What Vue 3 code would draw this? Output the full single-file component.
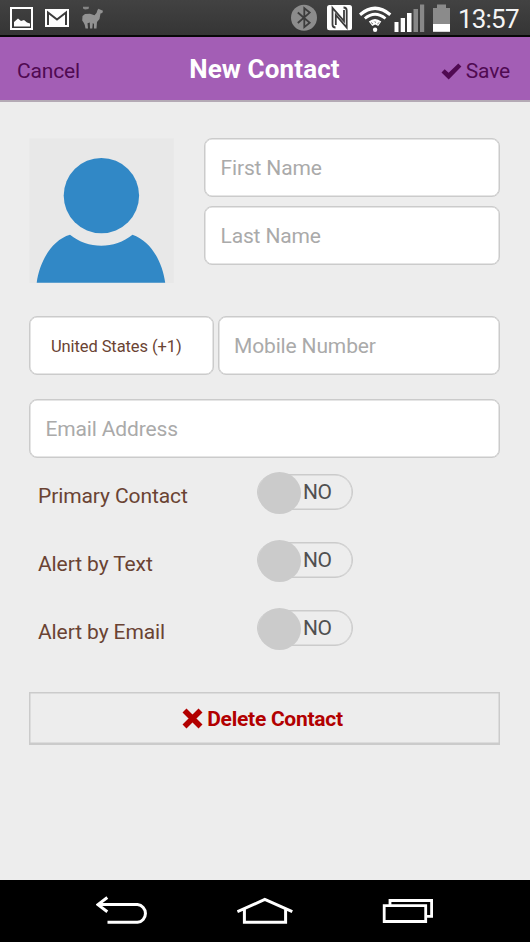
<script setup>
import { reactive } from 'vue'

const form = reactive({ first: '', last: '', mobile: '', email: '' })
const toggles = reactive([
  { label: 'Primary Contact', on: false },
  { label: 'Alert by Text', on: false },
  { label: 'Alert by Email', on: false },
])
</script>

<template>
  <div class="screen">
    <div class="status">
      <svg class="pic" width="23" height="35" viewBox="10 0 23 35">
        <path d="M11 8H32V29H11Z" fill="none" stroke="#fff" stroke-width="2" />
        <path d="M14 26.5V22L18 18.5L21 21L24 20L27 22.5L30 23.5V26.5Z" fill="#fff" />
      </svg>
      <svg class="mail" width="24" height="35" viewBox="45 0 24 35">
        <path d="M45 9H69V27H45Z" fill="#fff" />
        <path d="M48 25V12.5L57 19.5L66 12.5V25" fill="none" stroke="#3c3c3c" stroke-width="2" />
      </svg>
      <svg class="llama" width="22" height="35" viewBox="82 0 22 35">
        <path d="M83 6.800H89L88.500 9L85 9.600L83 8.500Z" fill="#858585" />
        <path d="M97.500 10L98.500 8.800L100 9.500L103 10.800L102.300 13L100.500 13.500L99.500 19L97 22L96.500 28.500H94L94 24L92.800 23L92.300 28.500H90L89.800 22.500L87.500 23.200L88 28.500H85.500L84.800 25L83.600 22.500L82.200 20.500L82.500 16L85 14L90 13.800L94.500 15.200L96.500 13Z" fill="#929292" />
      </svg>
      <span class="spacer"></span>
      <svg class="bt" width="26" height="35" viewBox="291 0 26 35">
        <circle cx="304" cy="17.800" r="13" fill="#8c8c8c" />
        <path d="M297.800 12.500L309.700 22.800L304.300 27.200V8.200L309.700 12.600L297.800 23" fill="none" stroke="#3d3d3d" stroke-width="1.800" />
      </svg>
      <svg class="nfc" width="25" height="35" viewBox="327 0 25 35">
        <rect x="327" y="5" width="25" height="25.200" rx="2.500" fill="#fff" />
        <path d="M335.500 27.500Q332.500 27.500 332.500 24.500V8L344 21V10M343.500 7.500Q346.700 7.500 346.700 10.500V27.500L335.800 15V25" fill="none" stroke="#3c3c3c" stroke-width="1.800" />
      </svg>
      <svg class="wifi" width="33" height="35" viewBox="359 0 33 35">
        <g fill="none" stroke="#fff">
          <path d="M360 14.700Q375 1.800 390.300 14.700" stroke-width="3.200" />
          <path d="M364.800 18.500Q375 10 385.500 18.500" stroke-width="2.800" />
        </g>
        <path d="M368.800 21.500Q375 16.500 381.300 21.500L378.200 26L375.200 24.500L372.300 26Z" fill="#fff" />
        <path d="M371 22.500L373 24M379.300 22.500L377.300 24M374.300 21.500L375.200 22.400L376.100 21.500" fill="none" stroke="#555" stroke-width="0.800" />
        <circle cx="375.100" cy="29.700" r="2.200" fill="#fff" />
      </svg>
      <svg class="signal" width="31" height="35" viewBox="394 0 31 35">
        <path d="M394.500 22H398.500V32H394.500ZM400.700 18H405V32H400.700ZM407 13H411.500V32H407Z" fill="#fff" />
        <path d="M413.500 9H418V32H413.500ZM420 4.500H424.200V32H420Z" fill="#888" />
      </svg>
      <svg class="battery" width="18" height="35" viewBox="433 0 18 35">
        <path d="M437 4.500H446V8H450V24H433V8H437Z" fill="#8b8b8b" />
        <path d="M433 24H450V31.800H433Z" fill="#fff" />
      </svg>
      <span class="time">13:57</span>
    </div>

    <header class="header">
      <button class="link cancel">Cancel</button>
      <h1>New Contact</h1>
      <button class="link save">
        <svg width="21" height="17" viewBox="0 0 21 17"><path d="M0.500 9.500L3.700 6.200L7.600 9.800L17.300 0.500L20.400 3.600L7.700 16.400Z" fill="#500a52" /></svg>
        <span>Save</span>
      </button>
    </header>

    <main class="body">
      <div class="top">
        <svg class="avatar" width="145" height="145" viewBox="29 138 145 145">
          <rect x="29.500" y="138.300" width="144.300" height="145" fill="#e8e8e8" />
          <circle cx="101.400" cy="195.600" r="37.700" fill="#3188c6" />
          <path d="M36.700 282.800C39.500 262 51.500 240 70 234.700C88 249.400 114.500 249.400 132.500 234.700C151 241 162.500 262 165.200 282.800Z" fill="#3188c6" />
        </svg>
        <div class="names">
          <input v-model="form.first" placeholder="First Name" />
          <input v-model="form.last" placeholder="Last Name" />
        </div>
      </div>

      <div class="phone">
        <button class="country">United States (+1)</button>
        <input v-model="form.mobile" placeholder="Mobile Number" />
      </div>

      <input v-model="form.email" class="email" placeholder="Email Address" />

      <div class="toggles">
        <div v-for="t in toggles" :key="t.label" class="row">
          <span class="label">{{ t.label }}</span>
          <button class="switch" :class="{ on: t.on }" @click="t.on = !t.on">
            <i class="knob"></i><span class="state">{{ t.on ? 'YES' : 'NO' }}</span>
          </button>
        </div>
      </div>

      <button class="delete">
        <svg width="21" height="21" viewBox="0 0 21 21"><path d="M2.500 2.500L18.500 18.500M18.500 2.500L2.500 18.500" stroke="#b20000" stroke-width="5.600" /></svg>
        <span>Delete Contact</span>
      </button>
    </main>

    <nav class="nav">
      <svg width="52" height="30" viewBox="96 895 52 30" fill="none" stroke="#fff" stroke-width="3">
        <path d="M107.300 897.500L98 904.600L107.300 911.700M98 904.600H137.500A8.900 8.900 0 0 1 137.500 922.300H107.500" />
      </svg>
      <svg width="56" height="30" viewBox="237 895 56 30" fill="none" stroke="#fff" stroke-width="3">
        <path d="M237.400 911.700L264.800 899.500L292.300 911.700M244.400 909.500V922.200H285.600V909.500" />
      </svg>
      <svg width="52" height="30" viewBox="382 895 52 30" fill="none" stroke="#fff" stroke-width="2.800">
        <path d="M384.200 905.600H425.700V921.500H384.200ZM390 905V900.500H431.600V916.400H426" />
      </svg>
    </nav>
  </div>
</template>

<style>
body {
  margin: 0;
  background: #ededed;
}
</style>

<style scoped>
.screen {
  width: 530px;
  height: 942px;
  display: flex;
  flex-direction: column;
  overflow: hidden;
  background: #ededed;
  font-family: Roboto, "Liberation Sans", sans-serif;
}
.screen * { box-sizing: border-box; }
svg { display: block; flex: none; }
button, input {
  font-family: inherit;
  margin: 0;
  padding: 0;
  border: 0;
  background: none;
  outline: none;
}
.status {
  height: 37px;
  flex: none;
  display: flex;
  padding: 0 11px 0 10px;
  background: linear-gradient(#424242, #353535 35px, #080808 35px, #080808);
}
.mail { margin-left: 12px; }
.llama { margin-left: 13px; }
.spacer { flex: 1; }
.nfc { margin-left: 10px; }
.wifi { margin-left: 7px; }
.signal { margin-left: 2px; }
.battery { margin-left: 8px; }
.time {
  width: 61px;
  margin-left: 7px;
  font-size: 26px;
  letter-spacing: -0.800px;
  line-height: 38px;
  color: #f4f4f4;
  white-space: nowrap;
}
.header {
  height: 65px;
  flex: none;
  display: grid;
  grid-template-columns: 1fr auto 1fr;
  padding: 0 19px 0 17px;
  background: #a35eb5;
  border-bottom: 2px solid #b4aab5;
}
.header h1 {
  margin: 0;
  padding-left: 1px;
  font-size: 26px;
  letter-spacing: 0.120px;
  line-height: 64px;
  font-weight: 700;
  color: #fff;
}
.link {
  font-size: 21px;
  letter-spacing: -0.150px;
  line-height: 67px;
  padding-top: 1px;
  color: #500a52;
  text-align: left;
}
.save {
  display: flex;
  justify-content: flex-end;
  align-items: center;
  gap: 4px;
  padding-right: 1px;
}
.body {
  flex: 1;
  display: flex;
  flex-direction: column;
  padding: 36px 30px 0 29px;
}
input, .country {
  height: 59px;
  width: 100%;
  border: 1px solid #cbcbcb;
  box-shadow: inset 0 0 0 0.500px #cbcbcb;
  border-radius: 8px;
  background: #fff;
  font-size: 21px;
  letter-spacing: -0.150px;
  padding-left: 15.500px;
  color: #6a4333;
}
input::placeholder { color: #aaa; opacity: 1; }
.top {
  display: flex;
  justify-content: space-between;
}
.names {
  width: 296px;
  display: flex;
  flex-direction: column;
  gap: 9px;
}
.phone {
  display: flex;
  gap: 4px;
  margin-top: 33px;
}
.phone .country {
  width: 185px;
  flex: none;
  font-size: 16.500px;
  letter-spacing: -0.100px;
  text-align: left;
  padding: 2px 0 0 21px;
}
.phone input { padding-left: 15px; }
.email { margin-top: 24px; flex: none; }
.toggles {
  display: flex;
  flex-direction: column;
  gap: 26px;
  margin-top: 14px;
}
.row {
  height: 42px;
  display: flex;
}
.label {
  width: 228px;
  padding-left: 9px;
  font-size: 21px;
  letter-spacing: -0.100px;
  line-height: 48px;
  color: #6a4333;
}
.switch {
  width: 96px;
  height: 36px;
  margin-top: 2px;
  border: 1px solid #cbcbcb;
  box-shadow: inset 0 0 0 0.500px #cbcbcb;
  border-radius: 18px;
  display: flex;
  align-items: center;
}
.knob {
  width: 43px;
  height: 42px;
  flex: none;
  margin: 2px 0 0 -0.500px;
  border-radius: 50%;
  background: #cbcbcb;
}
.switch.on { flex-direction: row-reverse; }
.state {
  margin-left: 2.500px;
  font-size: 21px;
  letter-spacing: -0.500px;
  color: #505050;
}
.delete {
  height: 53px;
  margin-top: 42px;
  border: 1px solid #cbcbcb;
  border-bottom-width: 2px;
  box-shadow: inset 0 0 0 0.500px #cbcbcb;
  display: flex;
  align-items: center;
  justify-content: center;
  gap: 4px;
  padding: 1px 4px 0 0;
  font-size: 21px;
  letter-spacing: -0.270px;
  font-weight: 700;
  color: #b20000;
}
.nav {
  height: 62px;
  flex: none;
  display: flex;
  justify-content: space-between;
  padding: 15px 96px 0;
  background: #000;
}
</style>
